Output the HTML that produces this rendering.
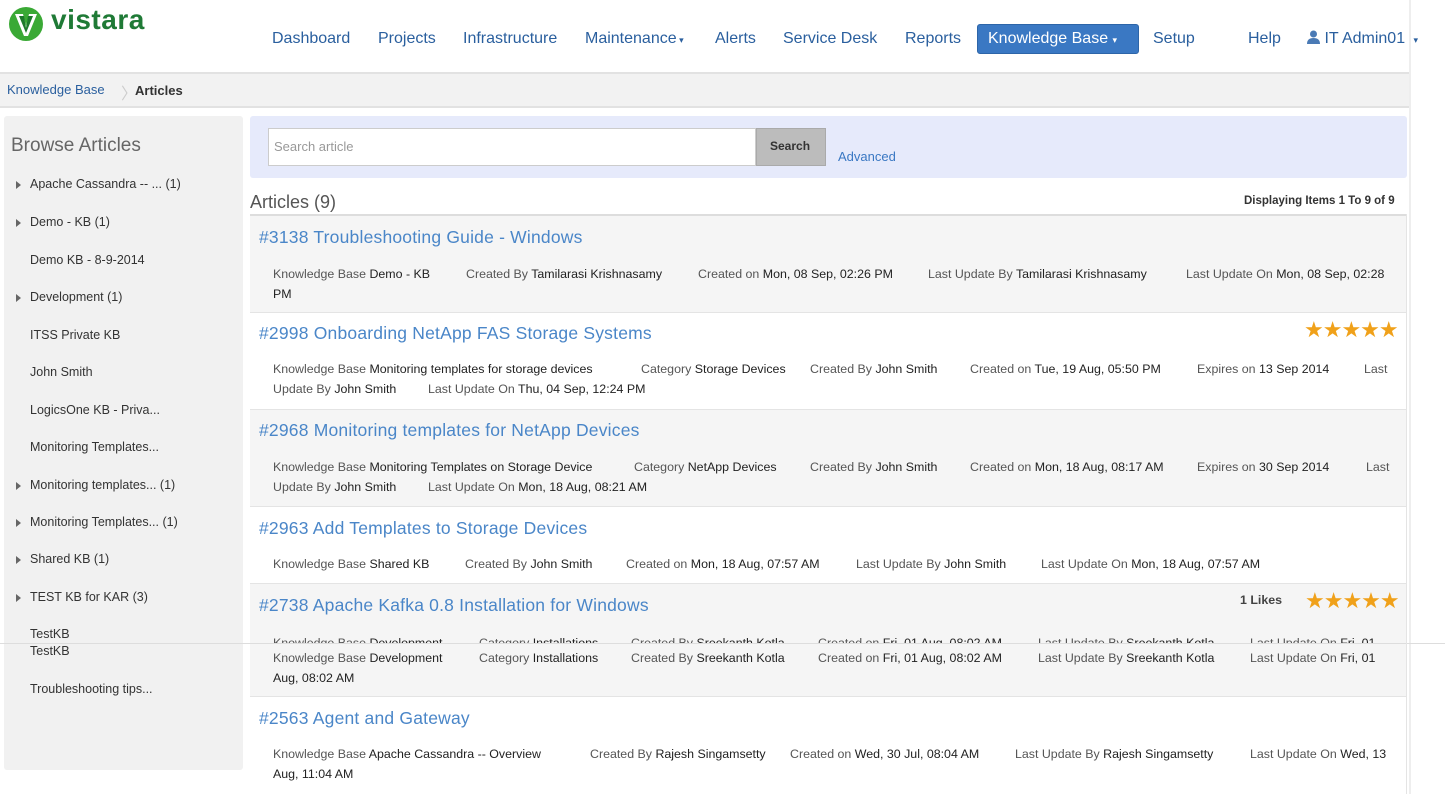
<!DOCTYPE html>
<html><head><meta charset="utf-8"><style>
*{margin:0;padding:0;box-sizing:border-box}
body{width:1445px;height:794px;overflow:hidden;background:#fff;font-family:"Liberation Sans",Arial,sans-serif;position:relative;color:#333}
.a{position:absolute;white-space:nowrap}
.nav{font-size:16px;color:#2a5f9e;top:30px}
.side{font-size:12.5px;color:#333;left:30px}
.tri{position:absolute;left:16px;width:0;height:0;border-left:5px solid #666;border-top:4px solid transparent;border-bottom:4px solid transparent}
.card{position:absolute;left:250px;width:1157px;border-top:1px solid #e4e4e4}
.g{background:#f5f5f5}
.t{position:absolute;left:9px;font-size:17.5px;color:#4a86c8;white-space:nowrap;letter-spacing:0.2px}
.m{position:absolute;font-size:12.4px;color:#555;white-space:nowrap}
.m b{font-weight:normal;color:#222}
.star{color:#f0a11a;font-size:22px;letter-spacing:-1px;position:absolute;white-space:nowrap}
</style></head><body>
<svg class="a" style="left:8px;top:6px" width="36" height="36" viewBox="0 0 36 36"><circle cx="18" cy="18" r="17" fill="#3aa935"/><path d="M7 8 L15 8 L18 20 L21 8 L29 8 L20 30 L16 30 Z" fill="#fff"/><path d="M11 10 L16 10 L18 22 L20 10 L25 10 L18 27 Z" fill="#1d7a2b"/></svg>
<div class="a" style="left:51px;top:4px;font-size:28px;font-weight:bold;color:#1f7a36;letter-spacing:0.5px">vistara</div>
<div class="a nav" style="left:272px">Dashboard</div>
<div class="a nav" style="left:378px">Projects</div>
<div class="a nav" style="left:463px">Infrastructure</div>
<div class="a nav" style="left:585px">Maintenance<span style="font-size:9px"> ▾</span></div>
<div class="a nav" style="left:715px">Alerts</div>
<div class="a nav" style="left:783px">Service Desk</div>
<div class="a nav" style="left:905px">Reports</div>
<div class="a" style="left:977px;top:24px;width:162px;height:30px;background:#3a78c3;border-radius:3px;border:1px solid #2d65a8"></div>
<div class="a nav" style="left:988px;color:#fff">Knowledge Base <span style="font-size:9px">▾</span></div>
<div class="a nav" style="left:1153px">Setup</div>
<div class="a nav" style="left:1248px">Help</div>
<div class="a nav" style="left:1307px"><svg width="13" height="14" viewBox="0 0 13 14" style="vertical-align:-1px"><circle cx="6.5" cy="4" r="3.5" fill="#4a7ab5"/><path d="M0 14 Q0 8 6.5 8 Q13 8 13 14Z" fill="#4a7ab5"/></svg> IT Admin01 <span style="font-size:9px;margin-left:4px">▾</span></div>
<div class="a" style="left:1409px;top:0;width:2px;height:794px;background:#eee"></div>
<div class="a" style="left:0;top:72px;width:1409px;height:36px;background:#f2f2f2;border-top:2px solid #e2e2e2;border-bottom:2px solid #e2e2e2"></div>
<div class="a" style="left:7px;top:82px;font-size:13px;color:#2a5f9e">Knowledge Base</div>
<div class="a" style="left:121px;top:80px;font-size:16px;color:#ccc">〉</div>
<div class="a" style="left:135px;top:83px;font-size:13px;font-weight:bold;color:#333">Articles</div>
<div class="a" style="left:4px;top:116px;width:239px;height:654px;background:#f1f1f1;border-radius:3px"></div>
<div class="a" style="left:11px;top:135px;font-size:19px;color:#666">Browse Articles</div>
<div class="tri" style="top:181px"></div><div class="a side" style="top:177px">Apache Cassandra -- ... (1)</div>
<div class="tri" style="top:219px"></div><div class="a side" style="top:215px">Demo - KB (1)</div>
<div class="a side" style="top:253px">Demo KB - 8-9-2014</div>
<div class="tri" style="top:294px"></div><div class="a side" style="top:290px">Development (1)</div>
<div class="a side" style="top:328px">ITSS Private KB</div>
<div class="a side" style="top:365px">John Smith</div>
<div class="a side" style="top:403px">LogicsOne KB - Priva...</div>
<div class="a side" style="top:440px">Monitoring Templates...</div>
<div class="tri" style="top:482px"></div><div class="a side" style="top:478px">Monitoring templates... (1)</div>
<div class="tri" style="top:519px"></div><div class="a side" style="top:515px">Monitoring Templates... (1)</div>
<div class="tri" style="top:556px"></div><div class="a side" style="top:552px">Shared KB (1)</div>
<div class="tri" style="top:594px"></div><div class="a side" style="top:590px">TEST KB for KAR (3)</div>
<div class="a side" style="top:627px">TestKB</div>
<div class="a side" style="top:644px">TestKB</div>
<div class="a side" style="top:682px">Troubleshooting tips...</div>
<div class="a" style="left:250px;top:116px;width:1157px;height:62px;background:#e6eafb;border-radius:3px"></div>
<div class="a" style="left:268px;top:128px;width:488px;height:38px;background:#fff;border:1px solid #ccc"></div>
<div class="a" style="left:274px;top:139px;font-size:13px;color:#999">Search article</div>
<div class="a" style="left:756px;top:128px;width:70px;height:38px;background:#bcbcbc;border:1px solid #aaa"></div>
<div class="a" style="left:770px;top:139px;font-size:12px;font-weight:bold;color:#333">Search</div>
<div class="a" style="left:838px;top:149px;font-size:13px;color:#3a78c3">Advanced</div>
<div class="a" style="left:250px;top:192px;font-size:18px;color:#555">Articles (9)</div>
<div class="a" style="left:1244px;top:195px;font-size:11.5px;font-weight:bold;color:#333">Displaying Items 1 To 9 of 9</div>
<div class="card g" style="top:214px;height:98px;border-top:2px solid #ddd">
<div class="t" style="top:11px">#3138 Troubleshooting Guide - Windows</div>
<div class="m" style="left:23px;top:51px">Knowledge Base <b>Demo - KB</b></div>
<div class="m" style="left:216px;top:51px">Created By <b>Tamilarasi Krishnasamy</b></div>
<div class="m" style="left:448px;top:51px">Created on <b>Mon, 08 Sep, 02:26 PM</b></div>
<div class="m" style="left:678px;top:51px">Last Update By <b>Tamilarasi Krishnasamy</b></div>
<div class="m" style="left:936px;top:51px">Last Update On <b>Mon, 08 Sep, 02:28</b></div>
<div class="m" style="left:23px;top:71px"><b>PM</b></div>
</div>
<div class="card" style="top:312px;height:97px">
<div class="t" style="top:10px">#2998 Onboarding NetApp FAS Storage Systems</div>
<div class="star" style="left:1054px;top:4px">★★★★★</div>
<div class="m" style="left:23px;top:49px">Knowledge Base <b>Monitoring templates for storage devices</b></div>
<div class="m" style="left:391px;top:49px">Category <b>Storage Devices</b></div>
<div class="m" style="left:560px;top:49px">Created By <b>John Smith</b></div>
<div class="m" style="left:720px;top:49px">Created on <b>Tue, 19 Aug, 05:50 PM</b></div>
<div class="m" style="left:947px;top:49px">Expires on <b>13 Sep 2014</b></div>
<div class="m" style="left:1114px;top:49px">Last</div>
<div class="m" style="left:23px;top:69px">Update By <b>John Smith</b></div>
<div class="m" style="left:178px;top:69px">Last Update On <b>Thu, 04 Sep, 12:24 PM</b></div>
</div>
<div class="card g" style="top:409px;height:97px">
<div class="t" style="top:10px">#2968 Monitoring templates for NetApp Devices</div>
<div class="m" style="left:23px;top:50px">Knowledge Base <b>Monitoring Templates on Storage Device</b></div>
<div class="m" style="left:384px;top:50px">Category <b>NetApp Devices</b></div>
<div class="m" style="left:560px;top:50px">Created By <b>John Smith</b></div>
<div class="m" style="left:720px;top:50px">Created on <b>Mon, 18 Aug, 08:17 AM</b></div>
<div class="m" style="left:947px;top:50px">Expires on <b>30 Sep 2014</b></div>
<div class="m" style="left:1116px;top:50px">Last</div>
<div class="m" style="left:23px;top:70px">Update By <b>John Smith</b></div>
<div class="m" style="left:178px;top:70px">Last Update On <b>Mon, 18 Aug, 08:21 AM</b></div>
</div>
<div class="card" style="top:506px;height:77px">
<div class="t" style="top:11px">#2963 Add Templates to Storage Devices</div>
<div class="m" style="left:23px;top:50px">Knowledge Base <b>Shared KB</b></div>
<div class="m" style="left:215px;top:50px">Created By <b>John Smith</b></div>
<div class="m" style="left:376px;top:50px">Created on <b>Mon, 18 Aug, 07:57 AM</b></div>
<div class="m" style="left:606px;top:50px">Last Update By <b>John Smith</b></div>
<div class="m" style="left:791px;top:50px">Last Update On <b>Mon, 18 Aug, 07:57 AM</b></div>
</div>
<div class="card g" style="top:583px;height:113px;overflow:hidden">
<div class="t" style="top:11px">#2738 Apache Kafka 0.8 Installation for Windows</div>
<div class="m" style="left:990px;top:9px;font-weight:bold;color:#444">1 Likes</div>
<div class="star" style="left:1055px;top:4px">★★★★★</div>
<div style="position:absolute;left:0;top:50px;width:1157px;height:10px;overflow:hidden">
<div class="m" style="left:23px;top:2px">Knowledge Base <b>Development</b></div>
<div class="m" style="left:229px;top:2px">Category <b>Installations</b></div>
<div class="m" style="left:381px;top:2px">Created By <b>Sreekanth Kotla</b></div>
<div class="m" style="left:568px;top:2px">Created on <b>Fri, 01 Aug, 08:02 AM</b></div>
<div class="m" style="left:788px;top:2px">Last Update By <b>Sreekanth Kotla</b></div>
<div class="m" style="left:1000px;top:2px">Last Update On <b>Fri, 01</b></div>
</div>
<div class="m" style="left:23px;top:67px">Knowledge Base <b>Development</b></div>
<div class="m" style="left:229px;top:67px">Category <b>Installations</b></div>
<div class="m" style="left:381px;top:67px">Created By <b>Sreekanth Kotla</b></div>
<div class="m" style="left:568px;top:67px">Created on <b>Fri, 01 Aug, 08:02 AM</b></div>
<div class="m" style="left:788px;top:67px">Last Update By <b>Sreekanth Kotla</b></div>
<div class="m" style="left:1000px;top:67px">Last Update On <b>Fri, 01</b></div>
<div class="m" style="left:23px;top:87px"><b>Aug, 08:02 AM</b></div>
</div>
<div class="a" style="left:0;top:643px;width:1445px;height:1px;background:#ddd"></div>
<div class="card" style="top:696px;height:98px">
<div class="t" style="top:11px">#2563 Agent and Gateway</div>
<div class="m" style="left:23px;top:50px">Knowledge Base <b>Apache Cassandra -- Overview</b></div>
<div class="m" style="left:340px;top:50px">Created By <b>Rajesh Singamsetty</b></div>
<div class="m" style="left:540px;top:50px">Created on <b>Wed, 30 Jul, 08:04 AM</b></div>
<div class="m" style="left:765px;top:50px">Last Update By <b>Rajesh Singamsetty</b></div>
<div class="m" style="left:1000px;top:50px">Last Update On <b>Wed, 13</b></div>
<div class="m" style="left:23px;top:70px"><b>Aug, 11:04 AM</b></div>
</div>
<div class="a" style="left:1406px;top:214px;width:1px;height:580px;background:#e4e4e4"></div>
</body></html>
